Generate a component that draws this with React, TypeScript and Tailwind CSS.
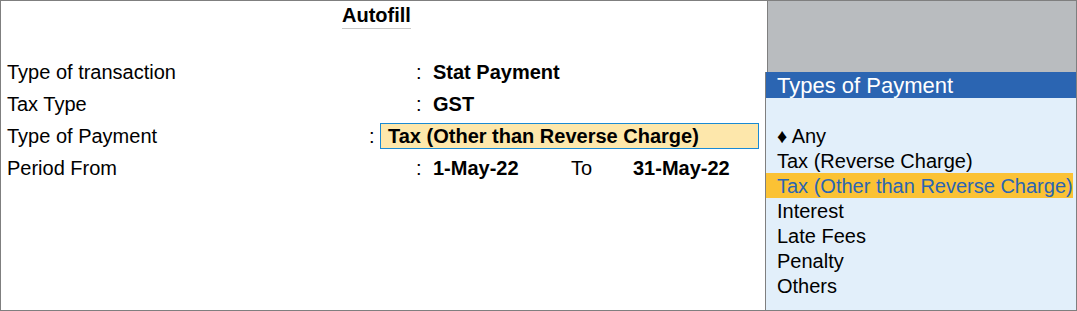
import React from "react";

const options = [
  "♦ Any",
  "Tax (Reverse Charge)",
  "Tax (Other than Reverse Charge)",
  "Interest",
  "Late Fees",
  "Penalty",
  "Others",
];

const App = () => {
  const selected = 2;

  return (
    <div
      className="flex h-[311px] w-[1077px] border border-[#7f7f7f] bg-white text-[20px] text-black"
      style={{ fontFamily: '"Liberation Sans", Arial, sans-serif' }}
    >
      {/* left form */}
      <div className="flex w-[764px] flex-col">
        <div className="flex h-[55px] pl-[341px] pt-[2px]">
          <span className="h-[26px] border-b border-[#c8c8c8] font-bold leading-[24px]">
            Autofill
          </span>
        </div>

        <div className="flex h-[32px] items-center">
          <span className="w-[415px] pl-[6px]">Type of transaction</span>
          <span className="w-[17px]">:</span>
          <span className="font-bold">Stat Payment</span>
        </div>
        <div className="flex h-[32px] items-center">
          <span className="w-[415px] pl-[6px]">Tax Type</span>
          <span className="w-[17px]">:</span>
          <span className="font-bold">GST</span>
        </div>
        <div className="flex h-[32px] items-center">
          <span className="w-[368px] pl-[6px]">Type of Payment</span>
          <span className="w-[11px]">:</span>
          <span className="flex h-[26px] w-[379px] items-center border border-[#1a8ad4] bg-[#fde7ab] pl-[7px] font-bold">
            Tax (Other than Reverse Charge)
          </span>
        </div>
        <div className="flex h-[32px] items-center">
          <span className="w-[415px] pl-[6px]">Period From</span>
          <span className="w-[17px]">:</span>
          <span className="w-[138px] font-bold">1-May-22</span>
          <span className="w-[62px]">To</span>
          <span className="font-bold">31-May-22</span>
        </div>
      </div>

      {/* right list */}
      <div className="flex flex-1 flex-col">
        <div className="ml-[2px] h-[71px] border-l border-[#7f7f7f] bg-[#b9bcbf]"></div>
        <div className="flex flex-1 flex-col border-l border-[#7f7f7f] bg-[#e2effa]">
          <div className="flex h-[26px] items-center bg-[#2b65b2] pl-[11px] text-[22px] text-white">
            Types of Payment
          </div>
          <div className="h-[25px]"></div>
          {options.map((opt, i) => (
            <div
              key={opt}
              className={
                i === selected
                  ? "mr-[3px] flex h-[25px] items-center whitespace-nowrap bg-[#fbc234] pl-[11px] text-[#2b65b2]"
                  : "flex h-[25px] items-center whitespace-nowrap pl-[11px]"
              }
            >
              {opt}
            </div>
          ))}
        </div>
      </div>
    </div>
  );
};

export default App;
